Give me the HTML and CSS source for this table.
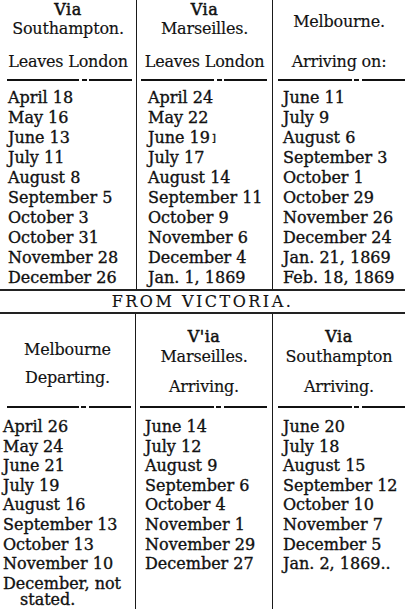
FILE: index.html
```
<!DOCTYPE html>
<html lang="en">
<head>
<meta charset="utf-8">
<title>Mail timetable</title>
<link rel="stylesheet" href="styles.css">
</head>
<body>
<div class="sheet">
  <div class="sec sec-top">
    <div class="col c1">
      <div class="hd hd-top">
        <div class="hl via">Via</div>
        <div class="hl">Southampton.</div>
        <div class="hl sub-top">Leaves London</div>
        <div class="dash"></div>
      </div>
      <ul class="rows">
        <li>April 18</li><li>May 16</li><li>June 13</li><li>July 11</li><li>August 8</li>
        <li>September 5</li><li>October 3</li><li>October 31</li><li>November 28</li><li>December 26</li>
      </ul>
    </div>
    <div class="col c2">
      <div class="hd hd-top">
        <div class="hl via">Via</div>
        <div class="hl">Marseilles.</div>
        <div class="hl sub-top">Leaves London</div>
        <div class="dash"></div>
      </div>
      <ul class="rows">
        <li>April 24</li><li>May 22</li><li>June 19<span class="spot">]</span></li><li>July 17</li><li>August 14</li>
        <li>September 11</li><li>October 9</li><li>November 6</li><li>December 4</li><li>Jan. 1, 1869</li>
      </ul>
    </div>
    <div class="col c3">
      <div class="hd hd-top hd-mel">
        <div class="hl">Melbourne.</div>
        <div class="hl sub-mel">Arriving on:</div>
        <div class="dash"></div>
      </div>
      <ul class="rows">
        <li>June 11</li><li>July 9</li><li>August 6</li><li>September 3</li><li>October 1</li>
        <li>October 29</li><li>November 26</li><li>December 24</li><li>Jan. 21, 1869</li><li>Feb. 18, 1869</li>
      </ul>
    </div>
  </div>

  <div class="banner">FROM VICTORIA.</div>

  <div class="sec sec-bot">
    <div class="col c1">
      <div class="hd hd-bot hd-dep">
        <div class="hl">Melbourne</div>
        <div class="hl sub-dep">Departing.</div>
        <div class="dash"></div>
      </div>
      <ul class="rows rows-bot">
        <li>April 26</li><li>May 24</li><li>June 21</li><li>July 19</li><li>August 16</li>
        <li>September 13</li><li>October 13</li><li>November 10</li><li class="wrap">December, not stated.</li>
      </ul>
    </div>
    <div class="col c2">
      <div class="hd hd-bot">
        <div class="hl via">V'ia</div>
        <div class="hl">Marseilles.</div>
        <div class="hl sub-arr">Arriving.</div>
        <div class="dash"></div>
      </div>
      <ul class="rows rows-bot">
        <li>June 14</li><li>July 12</li><li>August 9</li><li>September 6</li><li>October 4</li>
        <li>November 1</li><li>November 29</li><li>December 27</li>
      </ul>
    </div>
    <div class="col c3">
      <div class="hd hd-bot">
        <div class="hl via">Via</div>
        <div class="hl">Southampton</div>
        <div class="hl sub-arr">Arriving.</div>
        <div class="dash"></div>
      </div>
      <ul class="rows rows-bot">
        <li>June 20</li><li>July 18</li><li>August 15</li><li>September 12</li><li>October 10</li>
        <li>November 7</li><li>December 5</li><li>Jan. 2, 1869..</li>
      </ul>
    </div>
  </div>
</div>
</body>
</html>
```
FILE: styles.css
```
html, body {
  margin: 0;
  padding: 0;
  background: #ffffff;
}
body {
  width: 405px;
  height: 609px;
  overflow: hidden;
  font-family: "DejaVu Serif", "Liberation Serif", serif;
  font-size: 16px;
  color: #111111;
}
.sheet {
  width: 405px;
  display: flex;
  flex-direction: column;
}
.sec {
  display: grid;
}
.sec-top {
  grid-template-columns: 137px 136px 132px;
  height: 289px;
}
.sec-bot {
  grid-template-columns: 136px 137px 132px;
  height: 295px;
}
.col {
  display: flex;
  flex-direction: column;
  border-right: 1px solid #1a1a1a;
  min-width: 0;
}
.col.c3 {
  border-right: none;
}
.hd {
  display: flex;
  flex-direction: column;
  align-items: center;
  text-align: center;
  box-sizing: border-box;
  letter-spacing: -0.2px;
  -webkit-text-stroke: 0.15px #111;
}
.hd-top {
  height: 88px;
  padding-top: 0;
}
.hd-mel {
  padding-top: 12px;
}
.hd-bot {
  height: 103px;
  padding-top: 13px;
}
.hd-dep {
  padding-top: 26px;
}
.hl {
  line-height: 19px;
  white-space: nowrap;
}
.hl.via {
  -webkit-text-stroke: 0.5px #111;
  letter-spacing: 0.5px;
}
.hd-bot .hl {
  line-height: 20px;
}
.sub-top {
  margin-top: 14px;
}
.sub-mel {
  margin-top: 21px;
}
.sub-dep {
  margin-top: 8px;
}
.sub-arr {
  margin-top: 10px;
}
.dash {
  margin-top: auto;
  margin-bottom: 7px;
  height: 2px;
  align-self: stretch;
  background: linear-gradient(90deg, #111 0%, #111 58%, transparent 58%, transparent 60%, #111 60%, #111 64%, transparent 64%, transparent 66%, #111 66%, #111 100%);
}
.hd-bot .dash {
  margin-bottom: 9px;
}
.c1 .dash {
  margin-left: 7px;
  margin-right: 4px;
}
.c2 .dash {
  margin-left: 4px;
  margin-right: 5px;
}
.c3 .dash {
  margin-left: 5px;
  margin-right: 0;
}
.rows {
  list-style: none;
  margin: 0;
  padding: 0;
  line-height: 20px;
  white-space: nowrap;
  -webkit-text-stroke: 0.35px #111;
}
.rows-bot {
  line-height: 19.6px;
}
.c1 .rows {
  padding-left: 8px;
}
.sec-bot .c1 .rows {
  padding-left: 3px;
}
.c2 .rows {
  padding-left: 11px;
}
.sec-bot .c2 .rows {
  padding-left: 9px;
}
.c3 .rows {
  padding-left: 10px;
}
.wrap {
  white-space: normal;
  width: 126px;
  padding-left: 17px;
  text-indent: -17px;
  line-height: 16px;
  padding-top: 2px;
}
.spot {
  font-size: 10px;
  margin-left: 2px;
  vertical-align: 2px;
}
.banner {
  border-top: 2px solid #222;
  border-bottom: 2px solid #222;
  text-align: center;
  line-height: 21px;
  letter-spacing: 2.5px;
  white-space: nowrap;
  -webkit-text-stroke: 0.15px #111;
}
```
